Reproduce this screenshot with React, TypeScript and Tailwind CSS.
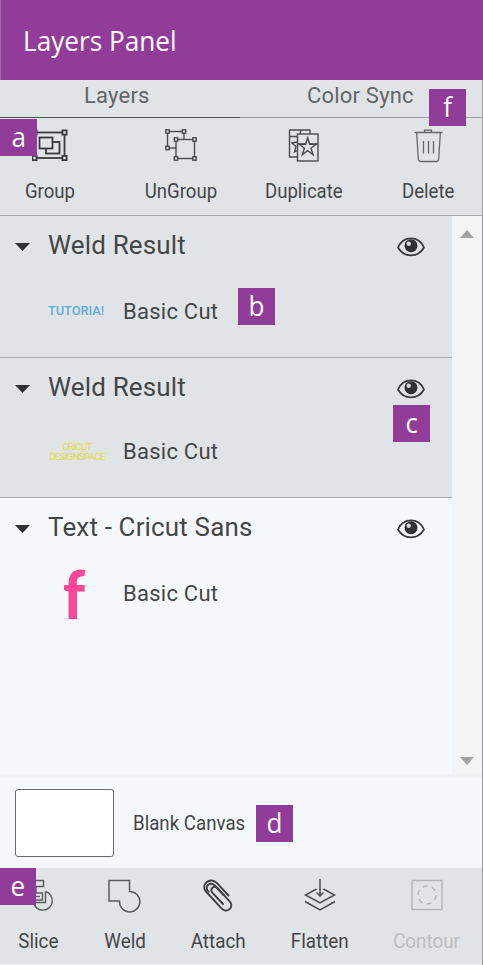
import type { ReactNode } from "react";

const Square = ({ x, y, s = 4 }: { x: number; y: number; s?: number }) => (
  <rect x={x - s / 2} y={y - s / 2} width={s} height={s} fill="#e1e4e6" />
);

const GroupIcon = () => (
  <svg width="36" height="33" viewBox="0 0 36 33" fill="none" stroke="#38393b" strokeWidth="1.8">
    <rect x="2.500" y="3.5" width="30" height="25.5" />
    <rect x="14" y="13" width="13.5" height="11.500" />
    <rect x="7.500" y="8.5" width="13" height="11" fill="#e1e4e6" />
    <Square x={2.5} y={3.5} s={4.2} />
    <Square x={32.5} y={3.5} s={4.2} />
    <Square x={2.5} y={29} s={4.2} />
    <Square x={32.5} y={29} s={4.2} />
  </svg>
);

const UngroupIcon = () => (
  <svg width="33" height="33" viewBox="0 0 33 33" fill="none" stroke="#4a4b4d" strokeWidth="1.4">
    <rect x="2.5" y="2.5" width="16.5" height="16.5" />
    <rect x="11" y="10.5" width="18.5" height="19" fill="#e1e4e6" />
    <Square x={2.5} y={2.5} s={3.4} />
    <Square x={19} y={2.5} s={3.4} />
    <Square x={2.5} y={19} s={3.4} />
    <Square x={11} y={10.5} s={3.4} />
    <Square x={29.5} y={10.5} s={3.4} />
    <Square x={11} y={29.5} s={3.4} />
    <Square x={29.5} y={29.5} s={3.4} />
  </svg>
);

const DuplicateIcon = () => (
  <svg width="32" height="33" viewBox="0 0 32 33" fill="none" stroke="#4a4b4d" strokeWidth="1.4">
    <path d="M9 28H1.5V1H22v4M1.5 7.500h8M9 13l-5 1 4 3.500L6.500 23 9 21.500" />
    <path d="M13 1l-1 4" />
    <rect x="9.500" y="5" width="20.500" height="27" fill="#e1e4e6" />
    <path d="M9.500 15h8M22 15h8" />
    <path d="M19.700 8.700l2 6.500h6.300l-5 4 2 6.500-5.300-4-5.300 4 2-6.500-5-4h6.300z" />
  </svg>
);

const TrashIcon = () => (
  <svg width="29" height="34" viewBox="0 0 29 34" fill="none" stroke="#66676a" strokeWidth="1.3">
    <path d="M.5 3.500h28M10.500 3.500V1.200h7v2.300" />
    <path d="M2.700 4l1.600 26q.2 2.500 2.500 2.500h15.400q2.300 0 2.500-2.500L26.300 4" />
    <path d="M9.500 12v12.500M14.500 12v12.500M19.500 12v12.500" />
  </svg>
);

const SliceIcon = () => (
  <svg width="36" height="34" viewBox="0 0 36 34" fill="none" stroke="#5b5c5e" strokeWidth="1.4">
    <path d="M2 1.500h20.500v6H15v6.500h6.500v7H2z" />
    <path d="M24.500 12.500v11h-12M24.500 12.500a9.500 9.500 0 1 1-12 11" />
    <path d="M15 17.500h4" />
  </svg>
);

const WeldIcon = () => (
  <svg width="34" height="34" viewBox="0 0 34 34" fill="none" stroke="#5b5c5e" strokeWidth="1.5">
    <path d="M1 1.500h20.500v11A10.200 10.200 0 1 1 11.500 22H1z" />
  </svg>
);

const AttachIcon = () => (
  <svg width="30" height="34" viewBox="0 0 30 34" fill="none" stroke="#404143" strokeWidth="1.900" strokeLinecap="round">
    <path d="M25.500 16.500L14 4.200C11 1 6.500.5 3.500 3.200S.5 9.700 3 12.500l15.500 16.800c2.300 2.500 5.500 3 8 .8s2.300-5.300.2-7.700L14.500 9.200c-1.500-1.600-3.600-1.700-5-.4s-1.500 3.300 0 5L20 25" />
    <path d="M20.500 16L12.200 7C9.800 4.500 7 4 5 6s-1.500 4.500.5 6.700" />
  </svg>
);

const FlattenIcon = () => (
  <svg width="32" height="34" viewBox="0 0 32 34" fill="none" stroke="#4a4b4d" strokeWidth="1.500">
    <path d="M16 0v16.500M12.500 13.500l3.500 3.500 3.500-3.500" />
    <path d="M12.500 10L1.500 16 16 24l14.500-8-11-6" />
    <path d="M1 22.500L16 31l15-8.500" />
  </svg>
);

const ContourIcon = () => (
  <svg width="32" height="34" viewBox="0 0 32 34" fill="none" stroke="#b5b6b8" strokeWidth="1.500">
    <rect x="1" y="1.500" width="30" height="29" />
    <circle cx="16" cy="16" r="9" strokeDasharray="5 4.420" />
  </svg>
);

const EyeIcon = () => (
  <svg className="mt-[3px] shrink-0" width="28" height="20" viewBox="0 0 28 20">
    <path d="M1 10.500C6-1.700 22-1.700 27 10.500C21 21 7 21 1 10.500z" fill="none" stroke="#38393b" strokeWidth="1.700" />
    <circle cx="14" cy="8.700" r="6.500" fill="#303133" />
    <circle cx="11.700" cy="6.700" r="2.200" fill="#d8dadc" />
  </svg>
);

const Badge = ({ className, children }: { className: string; children: ReactNode }) => (
  <span className={`absolute flex items-center justify-center h-[37px] bg-[#913c99] text-white text-[28px] leading-none font-['Open_Sans',sans-serif] pb-[3px] ${className}`}>
    <span className="scale-x-[.93]">{children}</span>
  </span>
);

const toolbar = [
  { label: "Group", icon: <GroupIcon />, width: "w-[100px]" },
  { label: "UnGroup", icon: <UngroupIcon />, width: "w-[162px]" },
  { label: "Duplicate", icon: <DuplicateIcon />, width: "w-[84px]" },
  { label: "Delete", icon: <TrashIcon />, width: "w-[136px] pl-7" },
];

const actions = [
  { label: "Slice", icon: <SliceIcon />, width: "w-[77px]" },
  { label: "Weld", icon: <WeldIcon />, width: "w-[96px]" },
  { label: "Attach", icon: <AttachIcon />, width: "w-[90px]" },
  { label: "Flatten", icon: <FlattenIcon />, width: "w-[114px]" },
  { label: "Contour", icon: <ContourIcon />, width: "w-[100px]", disabled: true },
];

const layers = [
  {
    title: "Weld Result",
    row: "h-[142px] border-b border-[#aeb0b2] bg-[#e1e4e6]",
    gap: "mt-[34px]",
    thumb: <span className="origin-left scale-x-[.98] whitespace-nowrap text-[13px] font-medium text-[#5facd9]">TUTORIA!</span>,
  },
  {
    title: "Weld Result",
    row: "h-[140px] border-b border-[#aeb0b2] bg-[#e1e4e6]",
    gap: "mt-[32px]",
    thumb: (
      <span className="w-[58px] pt-[2px] text-center text-[9.5px] leading-[10px] font-medium tracking-[-.6px] text-[#dfdc68]">
        CRICUT
        <br />
        DESIGNSPACE
      </span>
    ),
  },
  {
    title: "Text - Cricut Sans",
    row: "h-[275px]",
    gap: "mt-[34px]",
    thumb: <span className="origin-left scale-x-[.92] pl-[16px] text-[67px] leading-[30px] font-black text-[#fb4896] font-['Lato',sans-serif]">f</span>,
  },
];

export default function App() {
  return (
    <div className="relative flex h-[965px] w-[483px] flex-col overflow-hidden bg-[#f6f9fb] font-['Roboto',sans-serif] text-[#454648]">
      <header className="h-20 shrink-0 border-l border-[#a763ad] bg-[#913c99] pl-[22px] pt-[20px]">
        <h1 className="origin-left scale-x-[.935] text-[28px] leading-[40px] text-white font-['Open_Sans',sans-serif]">Layers Panel</h1>
      </header>
      <div className="flex flex-1 flex-col border-r border-[#9c9d9f]">
        <nav className="flex h-[38px] shrink-0 bg-[#e1e4e6] text-[22px] leading-[31px] tracking-[.2px] text-[#626569]">
          <div className="w-[240px] border-b border-[#4d4e52] pl-[84px]">Layers</div>
          <div className="flex-1 border-b border-[#9c9ea1] pl-[67px]">Color Sync</div>
        </nav>
        <div className="flex h-[98px] shrink-0 border-b border-[#a7a8aa] bg-[#e1e4e6] pt-[11px]">
          {toolbar.map((t) => (
            <button key={t.label} className={`flex shrink-0 flex-col items-center ${t.width}`}>
              <span className="h-[51px]">{t.icon}</span>
              <span className="scale-x-[.93] text-[20px] leading-[23px]">{t.label}</span>
            </button>
          ))}
        </div>
        <div className="flex h-[562px] shrink-0 border-b-4 border-[#eff1f3]">
          <div className="w-[452px]">
            {layers.map((l, i) => (
              <section key={i} className={`pt-[14px] ${l.row}`}>
                <div className="flex h-[30px] items-center pl-[15px] pr-[27px]">
                  <svg className="mt-[3px]" width="15" height="8" viewBox="0 0 15 8">
                    <path d="M0 0h15L7.500 8z" fill="#303133" />
                  </svg>
                  <h2 className="ml-[18px] flex-1 text-[26px] leading-[30px] tracking-[.15px]">{l.title}</h2>
                  <EyeIcon />
                </div>
                <div className={`flex h-[34px] items-center pl-12 ${l.gap}`}>
                  <div className="flex w-[75px] shrink-0 items-center">{l.thumb}</div>
                  <span className="text-[22px] tracking-[.25px]">Basic Cut</span>
                </div>
              </section>
            ))}
          </div>
          <div className="flex flex-1 flex-col items-center justify-between bg-[#f4f4f4] pt-[14px] pb-[9px]">
            <svg width="14" height="8" viewBox="0 0 14 8"><path d="M0 8h14L7 0z" fill="#a3a3a3" /></svg>
            <svg width="14" height="8" viewBox="0 0 14 8"><path d="M0 0h14L7 8z" fill="#a3a3a3" /></svg>
          </div>
        </div>
        <div className="flex h-[90px] shrink-0 items-center pl-[15px]">
          <div className="h-[68px] w-[99px] rounded-[3px] border-[1.500px] border-[#6a6b6d] bg-white" />
          <span className="ml-[19px] origin-left scale-x-[.935] text-[20px]">Blank Canvas</span>
        </div>
        <div className="flex h-24 shrink-0 bg-[#e1e4e6] pt-[11px]">
          {actions.map((a) => (
            <button key={a.label} className={`flex shrink-0 flex-col items-center ${a.width} ${a.disabled ? "text-[#bcbdbf]" : ""}`}>
              <span className="h-[51px]">{a.icon}</span>
              <span className="scale-x-[.94] text-[20px] leading-[23px]">{a.label}</span>
            </button>
          ))}
        </div>
      </div>
      <Badge className="left-0 top-[119px] w-[37px]">a</Badge>
      <Badge className="left-[238px] top-[288px] w-[37px]">b</Badge>
      <Badge className="left-[393px] top-[405px] w-[37px]">c</Badge>
      <Badge className="left-[256px] top-[805px] w-[37px]">d</Badge>
      <Badge className="left-0 top-[868px] w-[36px]">e</Badge>
      <Badge className="left-[429px] top-[89px] w-[37px]">f</Badge>
    </div>
  );
}
